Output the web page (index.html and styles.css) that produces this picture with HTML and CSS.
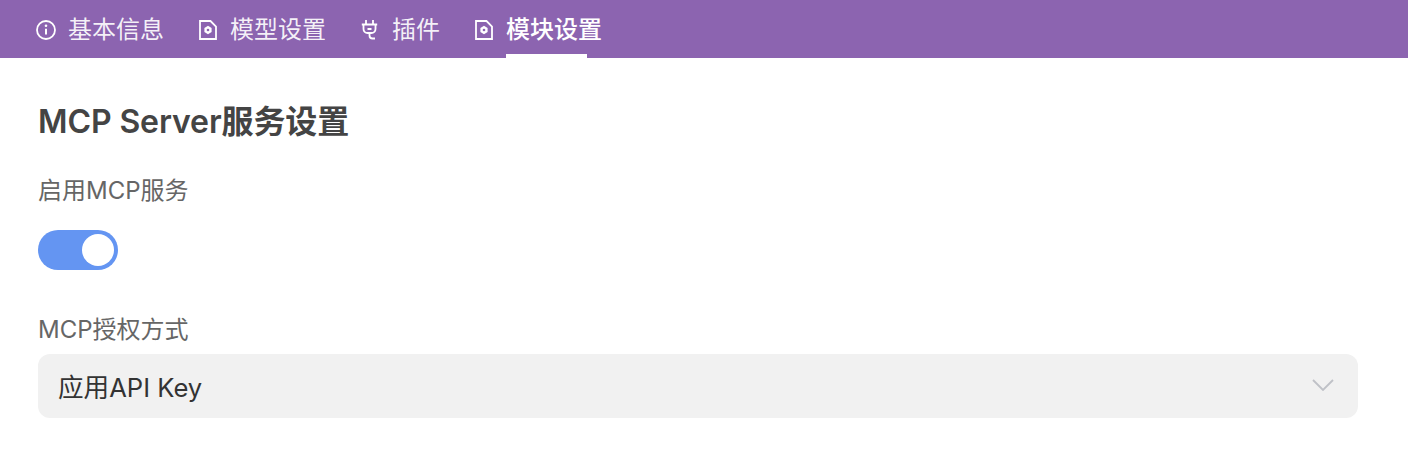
FILE: index.html
```html
<!DOCTYPE html>
<html lang="zh-CN">
<head>
<meta charset="utf-8">
<title>模块设置</title>
<link rel="stylesheet" href="styles.css">
</head>
<body>
<nav class="tabs">
  <a class="tab"><svg class="icon" viewBox="0 0 20 20"><circle cx="10" cy="10" r="9"/><path class="stem" d="M10 8.800v5.600"/><circle class="dot" cx="10" cy="5.700" r="1.300"/></svg><span class="tab-text">基本信息</span></a>
  <a class="tab"><svg class="icon" viewBox="0 0 20 20"><path d="M2 1h10.500L18 6.500V19H2z"/><path class="gear" d="M10 5.800l3.600 2.100v4.200L10 14.200l-3.600-2.100V7.900z"/><circle class="hole" cx="10" cy="10" r="1.300"/></svg><span class="tab-text">模型设置</span></a>
  <a class="tab"><svg class="icon" viewBox="0 0 20 20"><path d="M6 0v4.500M13 0v4.500M1.800 4.500h15.400M3.500 4.500V9a4 4 0 0 0 4 4h4a4 4 0 0 0 4-4V4.500M7.500 9h4M9.500 13v2.500a3 3 0 0 0 3 3h2.500"/></svg><span class="tab-text">插件</span></a>
  <a class="tab active"><svg class="icon" viewBox="0 0 20 20"><path d="M2 1h10.500L18 6.500V19H2z"/><path class="gear" d="M10 5.800l3.600 2.100v4.200L10 14.200l-3.600-2.100V7.900z"/><circle class="hole" cx="10" cy="10" r="1.300"/></svg><span class="tab-text">模块设置</span></a>
</nav>
<main class="content">
  <h1 class="title">MCP Server服务设置</h1>
  <div class="field field-switch">
    <label class="label">启用MCP服务</label>
    <div class="switch"><span class="knob"></span></div>
  </div>
  <div class="field field-select">
    <label class="label">MCP授权方式</label>
    <div class="select">
      <span>应用API Key</span>
      <svg class="chevron" viewBox="0 0 22 12"><path d="M1 1l10 10L21 1"/></svg>
    </div>
  </div>
</main>
</body>
</html>
```
FILE: styles.css
```css
* { box-sizing: border-box; }
html, body { margin: 0; padding: 0; background: #fff; }
body {
  font-family: Inter, "Noto Sans CJK SC", sans-serif;
  color: #333;
  height: 462px;
  overflow: hidden;
}
.tabs {
  display: flex;
  height: 58px;
  background: #8c64b0;
  padding-left: 36px;
  gap: 34px;
}
.tab {
  display: flex;
  align-items: center;
  gap: 12px;
  height: 58px;
  padding-top: 2px;
  color: rgba(255,255,255,.92);
  white-space: nowrap;
}
.tab-text {
  position: relative;
  font-size: 24px;
  line-height: 30px;
}
.tab.active { color: #fff; font-weight: 500; }
.tab.active .tab-text::after {
  content: "";
  position: absolute;
  left: 0;
  bottom: -15px;
  width: 81px;
  height: 6px;
  background: #fff;
}
.icon {
  width: 20px;
  height: 20px;
  fill: none;
  stroke: #fff;
  stroke-width: 1.800;
  flex: none;
  overflow: visible;
}
.icon .dot { fill: #fff; stroke: none; }
.icon .stem { stroke-width: 2; }
.icon .gear { fill: #fff; stroke: none; }
.icon .hole { fill: #8c64b0; stroke: none; }
.content { padding: 0 50px 0 38px; }
.title {
  margin: 0;
  padding-top: 43px;
  font-size: 32px;
  line-height: 42px;
  font-weight: 600;
  letter-spacing: -0.1px;
  color: #444;
}
.field-switch { margin-top: 31px; }
.label {
  display: block;
  font-size: 24px;
  line-height: 34px;
  color: #666;
}
.switch {
  display: flex;
  justify-content: flex-end;
  align-items: center;
  width: 80px;
  height: 40px;
  margin-top: 22px;
  padding-right: 4px;
  border-radius: 20px;
  background: #6495f2;
}
.knob {
  width: 32px;
  height: 32px;
  border-radius: 50%;
  background: #fff;
}
.field-select { margin-top: 43px; }
.select {
  display: flex;
  align-items: center;
  justify-content: space-between;
  height: 64px;
  margin-top: 7px;
  padding: 0 24px 2px 20px;
  border-radius: 12px;
  background: #f1f1f1;
  font-size: 25.600px;
  color: #333;
}
.chevron {
  width: 22px;
  height: 12px;
  fill: none;
  stroke: #bfc1c7;
  stroke-width: 1.800;
}
```
